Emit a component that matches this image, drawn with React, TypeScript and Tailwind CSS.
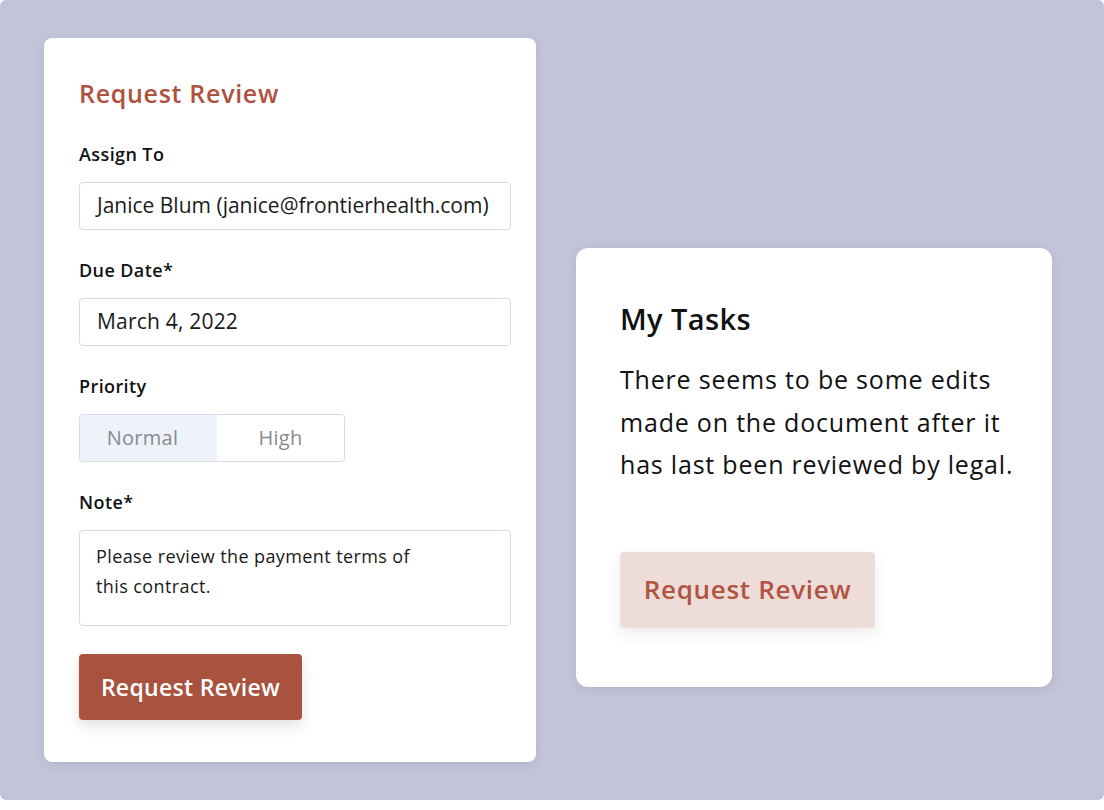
const font = { fontFamily: "'Open Sans', 'Noto Sans', sans-serif" };

function Field({ label, children }: { label: string; children: React.ReactNode }) {
  return (
    <div className="flex flex-col">
      <label className="mb-4 text-[18px] leading-6 font-semibold tracking-[0.4px] text-[#111]">{label}</label>
      {children}
    </div>
  );
}

export default function App() {
  return (
    <div className="bg-white" style={font}>
      <div className="flex h-[800px] w-[1104px] items-start gap-10 rounded-md bg-[#c3c3d9] pl-[44px] pt-[38px]">
        <div className="flex w-[492px] flex-col rounded-lg bg-white pb-[42px] pl-[35px] pr-[25px] pt-[39px] shadow-[0_2px_8px_rgba(60,60,100,0.12)]">
          <h2 className="text-[25px] leading-8 font-semibold tracking-[0.7px] text-[#b0513f]">Request Review</h2>

          <div className="mt-[33px] flex flex-col gap-7">
            <Field label="Assign To">
              <div className="flex h-12 items-center whitespace-nowrap rounded border border-[#d9d9ea] pl-[17px] text-[21px] text-[#1a1a1a]">
                Janice Blum (janice@frontierhealth.com)
              </div>
            </Field>

            <Field label="Due Date*">
              <div className="flex h-12 items-center rounded border border-[#d9d9ea] px-[17px] text-[21px] tracking-[0.2px] text-[#1a1a1a]">
                March 4, 2022
              </div>
            </Field>

            <Field label="Priority">
              <div className="flex h-12 w-[266px] overflow-hidden rounded border border-[#d9d9ea] text-[20px] tracking-[0.3px] text-[#8a8a8e]">
                <div className="flex w-[137px] items-center justify-center bg-[#eef3fb] pr-3">Normal</div>
                <div className="flex flex-1 items-center justify-center bg-white">High</div>
              </div>
            </Field>

            <Field label="Note*">
              <div className="h-24 rounded border border-[#d9d9ea] px-[16px] pt-[10px] text-[18px] leading-[30px] tracking-[0.4px] text-[#1a1a1a]">
                Please review the payment terms of
                <br />
                this contract.
              </div>
            </Field>
          </div>

          <button className="mt-7 flex h-[66px] w-[223px] items-center justify-center rounded bg-[#a9523f] text-[23px] font-semibold tracking-[0.3px] text-white shadow-[0_6px_14px_rgba(0,0,0,0.12)]">
            Request Review
          </button>
        </div>

        <div className="mt-[210px] flex w-[476px] flex-col rounded-xl bg-white pb-[59px] pl-[44px] pr-[30px] pt-[53px] shadow-[0_2px_8px_rgba(60,60,100,0.12)]">
          <h2 className="text-[29px] leading-9 font-semibold tracking-[0.4px] text-[#111]">My Tasks</h2>
          <p className="mt-[21px] text-[25px] leading-[42.5px] tracking-[0.8px] text-[#111]">
            There seems to be some edits made on the document after it has last been reviewed by legal.
          </p>
          <button className="mt-[66px] flex h-[76px] w-[255px] items-center justify-center rounded bg-[#eedcd9] text-[26px] font-semibold tracking-[0.7px] text-[#b05444] shadow-[0_6px_16px_rgba(0,0,0,0.08)]">
            Request Review
          </button>
        </div>
      </div>
    </div>
  );
}
